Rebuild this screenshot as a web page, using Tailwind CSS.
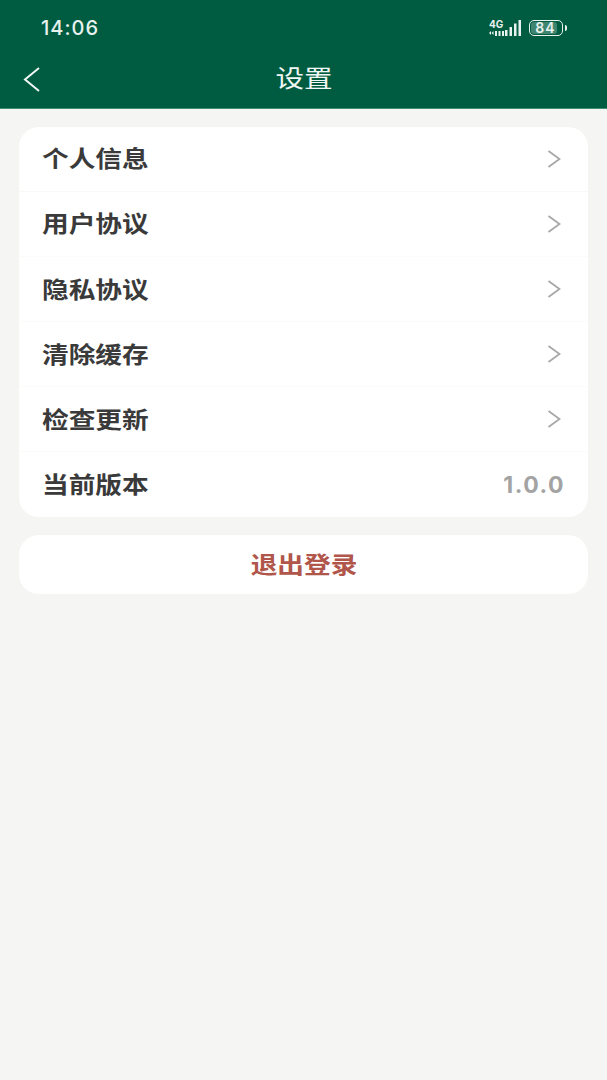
<!DOCTYPE html>
<html lang="zh">
<head>
<meta charset="utf-8">
<script src="https://cdn.jsdelivr.net/npm/@tailwindcss/browser@4"></script>
</head>
<body class="bg-[#f5f5f3] font-['Noto_Sans_CJK_SC','Noto_Sans',sans-serif]">
<div class="w-[607px] h-[1080px] overflow-hidden">
    <!-- Header -->
    <div class="bg-[#005c40] h-[109px] border-b border-[#3f8f73]">
        <!-- Status bar -->
        <div class="h-[54px] pl-[41px] pr-[40px] flex justify-between items-center text-white">
            <span class="text-[20px] font-['Inter'] font-medium tracking-[1px] leading-none text-[#e8f2ee] mt-[2px]">14:06</span>
            <div class="flex items-center gap-[7px] mt-[1px]">
                <svg width="33" height="19" viewBox="0 0 33 19" fill="#e8f2ee">
                    <text x="0" y="10" font-size="10" font-weight="700" font-family="Inter">4G</text>
                    <path d="M0 15 L2 13 V17 Z M4.5 13 L2.5 15 L4.5 17 Z"/>
                    <rect x="6" y="13" width="2" height="5"/>
                    <rect x="9.5" y="13" width="2" height="5"/>
                    <rect x="13" y="13" width="2" height="5"/>
                    <rect x="16" y="12" width="2.5" height="6"/>
                    <rect x="20.5" y="9" width="2.5" height="9"/>
                    <rect x="25" y="5.5" width="2.5" height="12.5"/>
                    <rect x="29.5" y="2" width="2.5" height="16"/>
                </svg>
                <div class="flex items-center gap-[2px]">
                    <div class="w-[34px] h-[16px] border border-[#e8f2ee] rounded-[5px] p-[1px]">
                        <div class="w-[86%] h-full bg-white/25 rounded-[3px] flex items-center justify-center text-[14px] font-['Inter'] font-semibold leading-none tracking-[1px] text-[#e8f2ee] pl-[3px]">84</div>
                    </div>
                    <div class="w-[2px] h-[6px] bg-[#e8f2ee] rounded-r"></div>
                </div>
            </div>
        </div>
        <!-- Title bar -->
        <div class="relative h-[54px] flex items-center justify-center">
            <svg class="absolute left-[23px] top-[13px]" width="17" height="25" viewBox="0 0 17 25" fill="none" stroke="#f0f6f3" stroke-width="2">
                <path d="M16 1 L2 12.5 L16 24"/>
            </svg>
            <span class="text-[24px] scale-x-[1.19] leading-none text-[#f0f6f3] mb-[8px]">设置</span>
        </div>
    </div>

    <!-- Settings list -->
    <div class="mx-[19px] mt-[18px] bg-white rounded-[20px] h-[390px] flex flex-col">
        <div class="h-[65px] pl-[23px] pr-[27px] flex items-center justify-between border-b border-[#f8f8f7]">
            <span class="text-[23px] scale-x-[1.16] origin-left font-bold text-[#3a3a3a] leading-none mb-[4px]">个人信息</span>
            <svg width="14" height="18" viewBox="0 0 14 18" fill="none" stroke="#a8a8a8" stroke-width="1.8"><path d="M1.5 1 L12.5 9 L1.5 17"/></svg>
        </div>
        <div class="h-[65px] pl-[23px] pr-[27px] flex items-center justify-between border-b border-[#fbfbfa]">
            <span class="text-[23px] scale-x-[1.16] origin-left font-bold text-[#3a3a3a] leading-none mb-[4px]">用户协议</span>
            <svg width="14" height="18" viewBox="0 0 14 18" fill="none" stroke="#a8a8a8" stroke-width="1.8"><path d="M1.5 1 L12.5 9 L1.5 17"/></svg>
        </div>
        <div class="h-[65px] pl-[23px] pr-[27px] flex items-center justify-between border-b border-[#fbfbfa]">
            <span class="text-[23px] scale-x-[1.16] origin-left font-bold text-[#3a3a3a] leading-none mb-[2px]">隐私协议</span>
            <svg width="14" height="18" viewBox="0 0 14 18" fill="none" stroke="#a8a8a8" stroke-width="1.8"><path d="M1.5 1 L12.5 9 L1.5 17"/></svg>
        </div>
        <div class="h-[65px] pl-[23px] pr-[27px] flex items-center justify-between border-b border-[#fbfbfa]">
            <span class="text-[23px] scale-x-[1.16] origin-left font-bold text-[#3a3a3a] leading-none mb-[2px]">清除缓存</span>
            <svg width="14" height="18" viewBox="0 0 14 18" fill="none" stroke="#a8a8a8" stroke-width="1.8"><path d="M1.5 1 L12.5 9 L1.5 17"/></svg>
        </div>
        <div class="h-[65px] pl-[23px] pr-[27px] flex items-center justify-between border-b border-[#fbfbfa]">
            <span class="text-[23px] scale-x-[1.16] origin-left font-bold text-[#3a3a3a] leading-none mb-[2px]">检查更新</span>
            <svg width="14" height="18" viewBox="0 0 14 18" fill="none" stroke="#a8a8a8" stroke-width="1.8"><path d="M1.5 1 L12.5 9 L1.5 17"/></svg>
        </div>
        <div class="h-[65px] pl-[23px] pr-[23px] flex items-center justify-between">
            <span class="text-[23px] scale-x-[1.16] origin-left font-bold text-[#3a3a3a] leading-none mb-[2px]">当前版本</span>
            <span class="text-[23px] font-['Inter'] font-bold text-[#a3a3a3] leading-none tracking-[1.5px] mt-[2px]">1.0.0</span>
        </div>
    </div>

    <!-- Logout -->
    <div class="mx-[19px] mt-[18px] h-[59px] bg-white rounded-[20px] flex items-center justify-center">
        <span class="text-[23px] scale-x-[1.16] font-bold text-[#b0564a] leading-none mb-[3px]">退出登录</span>
    </div>
</div>
</body>
</html>
